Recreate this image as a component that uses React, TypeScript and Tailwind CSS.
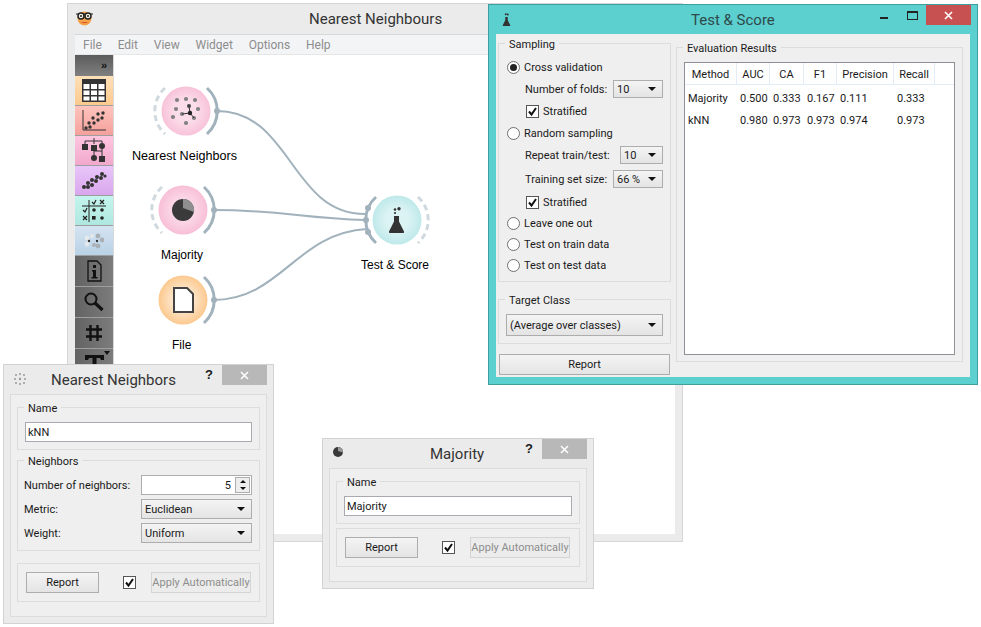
import type { ReactNode } from "react";

const ui = "font-['Roboto',sans-serif] text-[11px] leading-none text-[#1a1a1a] whitespace-nowrap";

function Group({ label, className, children }: { label?: string; className?: string; children?: ReactNode }) {
  return (
    <div className={`relative border border-[#dcdcdc] ${className ?? ""}`}>
      {label && <span className="absolute -top-[6px] left-[6px] bg-[#efefef] px-1 leading-[13px]">{label}</span>}
      {children}
    </div>
  );
}

function Radio({ checked, label }: { checked?: boolean; label: string }) {
  return (
    <div className="flex items-center gap-[4px] h-full">
      <span className="w-[13px] h-[13px] rounded-full border border-[#707070] bg-white flex items-center justify-center shrink-0">
        {checked && <span className="w-[7px] h-[7px] rounded-full bg-[#222]" />}
      </span>
      <span>{label}</span>
    </div>
  );
}

function Check({ label }: { label?: string }) {
  return (
    <div className="flex items-center gap-[4px]">
      <span className="w-[13px] h-[13px] border border-[#555] bg-white flex items-center justify-center shrink-0">
        <svg width="11" height="11" viewBox="0 0 11 11">
          <path d="M2 5.5 L4.5 8.5 L9 2" fill="none" stroke="#111" strokeWidth="2" />
        </svg>
      </span>
      {label && <span>{label}</span>}
    </div>
  );
}

function Combo({ value, className }: { value: string; className?: string }) {
  return (
    <div className={`flex items-center justify-between border border-[#adadad] bg-gradient-to-b from-[#f4f4f4] to-[#e4e4e4] pl-[3px] pr-[6px] ${className ?? ""}`}>
      <span>{value}</span>
      <span className="w-0 h-0 border-x-[4px] border-x-transparent border-t-[4px] border-t-[#111]" />
    </div>
  );
}

function Button({ label, className }: { label: string; className?: string }) {
  return (
    <div className={`flex items-center justify-center border border-[#adadad] bg-gradient-to-b from-[#f4f4f4] to-[#e4e4e4] ${className ?? ""}`}>
      {label}
    </div>
  );
}

function SmallWindow({ title, titleClass, icon, className, children }: { title: string; titleClass: string; icon: ReactNode; className: string; children: ReactNode }) {
  return (
    <div className={`absolute flex flex-col border border-[#d2d2d2] bg-[#ebebeb] ${className} ${ui}`}>
      <div className="flex items-start h-[29px] shrink-0 relative">
        <div className="absolute left-[9px] top-[7px]">{icon}</div>
        <span className={`flex-1 pt-[6px] text-[15px] leading-[18px] text-[#333] ${titleClass}`}>{title}</span>
        <span className="mt-[3px] mr-[9px] text-[13px] font-bold font-['Liberation_Sans',sans-serif]">?</span>
        <div className="w-[45px] h-[20px] mr-[6px] bg-[#b8b8b8] flex items-center justify-center">
          <svg width="9" height="9" viewBox="0 0 9 9"><path d="M1 1 L8 8 M8 1 L1 8" stroke="#fff" strokeWidth="1.5" /></svg>
        </div>
      </div>
      <div className="flex-1 mx-[6px] mb-[6px] border border-[#dcdcdc] bg-[#efefef] px-[6px] flex flex-col">{children}</div>
    </div>
  );
}

function BottomBar() {
  return (
    <Group className="h-[39px] flex items-center pl-[8px]">
      <Button label="Report" className="w-[73px] h-[21px]" />
      <div className="ml-[24px]"><Check /></div>
      <div className="ml-[15px] w-[100px] h-[21px] flex items-center justify-center border border-[#d4d4d4] bg-[#ececec] text-[#8c8c8c]">Apply Automatically</div>
    </Group>
  );
}

function Tile({ className, children }: { className: string; children: ReactNode }) {
  return <div className={`flex items-center justify-center shrink-0 border-b border-[#9e9e9e] ${className}`}>{children}</div>;
}

function Toolbox() {
  const dark = "h-[31px] bg-gradient-to-r from-[#636363] to-[#7c7c7c]";
  return (
    <div className="w-[38px] shrink-0 flex flex-col overflow-hidden">
      <div className="h-[21px] shrink-0 bg-gradient-to-b from-[#5c5c5c] to-[#808080] flex items-center justify-end pr-[6px] text-[11px] font-bold text-[#111] font-['Liberation_Sans',sans-serif]">»</div>
      <Tile className="h-[30px] bg-gradient-to-b from-[#fee0b8] to-[#fbc98d]">
        <svg width="24" height="24" viewBox="0 0 24 24">
          <rect x="0" y="0" width="24" height="23" fill="#333" />
          <path d="M1.5 5 H7.5 V10 H1.5Z M9 5 H15 V10 H9Z M16.5 5 H22.5 V10 H16.5Z M1.5 11.5 H7.5 V16 H1.5Z M9 11.5 H15 V16 H9Z M16.5 11.5 H22.5 V16 H16.5Z M1.5 17.5 H7.5 V21.5 H1.5Z M9 17.5 H15 V21.5 H9Z M16.5 17.5 H22.5 V21.5 H16.5Z" fill="#fff" />
        </svg>
      </Tile>
      <Tile className="h-[30px] bg-gradient-to-b from-[#ffc4bd] to-[#f4a09c]">
        <svg width="26" height="24" viewBox="0 0 26 24">
          <path d="M2 1 V21 H25" fill="none" stroke="#333" />
          <g fill="#333"><circle cx="5" cy="19" r="1.7" /><circle cx="9" cy="18" r="1.7" /><circle cx="8" cy="14" r="1.7" /><circle cx="13" cy="14" r="1.7" /><circle cx="12" cy="9" r="1.7" /><circle cx="17" cy="11" r="1.7" /><circle cx="17" cy="5" r="1.7" /><circle cx="22" cy="4" r="1.7" /><circle cx="21" cy="9" r="1.7" /></g>
        </svg>
      </Tile>
      <Tile className="h-[30px] bg-gradient-to-b from-[#ffc6e0] to-[#f0a8cc]">
        <svg width="26" height="26" viewBox="0 0 26 26">
          <path d="M4 6 V3 H21 V6 M13 0 V6 M21 9 V13 H13 V18 M21 13 V18" fill="none" stroke="#333" />
          <rect x="1" y="6" width="6" height="6" fill="#333" /><rect x="10" y="7" width="6" height="6" fill="#333" /><circle cx="21" cy="8" r="3" fill="#333" /><circle cx="13" cy="20" r="3" fill="#333" /><rect x="18" y="18" width="6" height="6" fill="#333" />
        </svg>
      </Tile>
      <Tile className="h-[30px] bg-gradient-to-b from-[#e9c6fa] to-[#d8a6ec]">
        <svg width="26" height="22" viewBox="0 0 26 22">
          <g fill="#333"><circle cx="3" cy="17" r="2" /><circle cx="7" cy="17" r="2" /><circle cx="7" cy="13" r="2" /><circle cx="11" cy="15" r="2" /><circle cx="11" cy="10" r="2" /><circle cx="15" cy="11" r="2" /><circle cx="16" cy="7" r="2" /><circle cx="20" cy="8" r="2" /><circle cx="21" cy="4" r="2" /><circle cx="24" cy="6" r="1.6" /></g>
        </svg>
      </Tile>
      <Tile className="h-[30px] bg-gradient-to-b from-[#c4f4ee] to-[#afe8e0]">
        <svg width="26" height="24" viewBox="0 0 26 24">
          <path d="M1 7 H25 M8 1 V23" stroke="#222" fill="none" />
          <path d="M11 3 L13 5 L15 1 M19 1 L23 5 M23 1 L19 5 M2 11 L4 13 L6 9 M2 17 L6 21 M6 17 L2 21" stroke="#222" strokeWidth="1.2" fill="none" />
          <circle cx="13" cy="11" r="1.8" fill="#222" /><circle cx="21" cy="11" r="1.8" fill="#222" /><rect x="11" y="17" width="3.6" height="3.6" fill="#222" /><circle cx="21" cy="19" r="1.8" fill="#222" />
        </svg>
      </Tile>
      <Tile className="h-[30px] bg-gradient-to-b from-[#d4e4f2] to-[#b9d2e6]">
        <svg width="20" height="16" viewBox="0 0 20 16">
          <g fill="#e6e9ec"><circle cx="3" cy="5" r="2.4" /><circle cx="3" cy="11" r="2.4" /><circle cx="8" cy="3" r="2" /></g>
          <g fill="#a9b0b6"><circle cx="14" cy="3" r="2.4" /><circle cx="18" cy="7" r="2.4" /><circle cx="14" cy="13" r="2.4" /><circle cx="10" cy="12" r="2" /></g>
          <circle cx="5" cy="8" r="1.2" fill="#333" /><circle cx="13" cy="8" r="1.2" fill="#333" />
        </svg>
      </Tile>
      <Tile className={dark}>
        <svg width="15" height="22" viewBox="0 0 15 22">
          <path d="M1 1 H10 L14 5 V21 H1 Z" fill="none" stroke="#111" strokeWidth="1.3" />
          <rect x="6" y="5" width="3" height="3" fill="#111" /><path d="M5 10 H9 V17 H10.5 V18.5 H4.5 V17 H6 V11.5 H5 Z" fill="#111" />
        </svg>
      </Tile>
      <Tile className={dark}>
        <svg width="20" height="20" viewBox="0 0 20 20">
          <circle cx="7" cy="7" r="5.5" fill="none" stroke="#111" strokeWidth="2" /><path d="M11 11 L18.5 18" stroke="#111" strokeWidth="3.2" />
        </svg>
      </Tile>
      <Tile className={dark}>
        <svg width="18" height="18" viewBox="0 0 18 18">
          <path d="M5.5 1 V17 M12.5 1 V17 M1 5.5 H17 M1 12.5 H17" stroke="#111" strokeWidth="2.4" />
        </svg>
      </Tile>
      <div className="h-[17px] shrink-0 bg-gradient-to-r from-[#636363] to-[#7c7c7c] relative flex justify-center overflow-hidden">
        <svg className="mt-[6px]" width="19" height="14" viewBox="0 0 19 14"><path d="M0 0 H19 V5 H16 L15 3 H11.5 V14 H7.5 V3 H4 L3 5 H0 Z" fill="#111" /></svg>
        <span className="absolute right-[3px] top-[2px] w-0 h-0 border-x-[3px] border-x-transparent border-t-[4px] border-t-[#111]" />
      </div>
    </div>
  );
}

function Node({ cx, cy, from, to, id }: { cx: number; cy: number; from: string; to: string; id: string }) {
  return (
    <>
      <radialGradient id={id}>
        <stop offset="45%" stopColor={from} />
        <stop offset="100%" stopColor={to} />
      </radialGradient>
      <circle cx={cx} cy={cy} r="24.5" fill={`url(#${id})`} />
    </>
  );
}

function Scheme() {
  const wire = "#a1b2bc";
  const ghost = "#cfd9de";
  return (
    <svg className="absolute inset-0" width="562" height="479" viewBox="113 55 562 479">
      <g fill="none" stroke={wire} strokeWidth="2">
        <path d="M216 111 C 290 111, 290 214, 364 214" />
        <path d="M212 210 C 280 210, 300 218, 364 220" />
        <path d="M212 300 C 280 300, 295 233, 366 229" />
      </g>
      <Node cx={185} cy={111} from="#fbdde9" to="#f8c2d8" id="n1" />
      <Node cx={182} cy={210} from="#fbd8e6" to="#f8bfd6" id="n2" />
      <Node cx={182} cy={300} from="#fde4c8" to="#fcc98f" id="n3" />
      <Node cx={396} cy={220} from="#dcf3f4" to="#bfe9ea" id="n4" />

      <g fill="none" strokeWidth="3" strokeLinecap="butt">
        <path d="M206 88 A31 31 0 0 1 206 134" stroke={wire} />
        <path d="M203 187 A31 31 0 0 1 203 233" stroke={wire} />
        <path d="M203 277 A31 31 0 0 1 203 323" stroke={wire} />
        <path d="M375 197 A31 31 0 0 0 375 243" stroke={wire} />
        <path d="M164 88 A31 31 0 0 0 164 134" stroke={ghost} strokeDasharray="6 4" />
        <path d="M161 187 A31 31 0 0 0 161 233" stroke={ghost} strokeDasharray="6 4" />
        <path d="M417 197 A31 31 0 0 1 417 243" stroke={ghost} strokeDasharray="6 4" />
      </g>
      <g fill={wire}>
        <circle cx="216" cy="111" r="3" /><circle cx="213" cy="210" r="3" /><circle cx="213" cy="300" r="3" />
        <circle cx="367" cy="208" r="3" /><circle cx="365" cy="220" r="3" /><circle cx="367" cy="232" r="3" />
      </g>

      <g fill="#808080">
        <circle cx="176" cy="100" r="2.1" /><circle cx="185" cy="99" r="2.1" /><circle cx="194" cy="100" r="2.1" />
        <circle cx="175" cy="109" r="2.1" /><circle cx="197" cy="109" r="2.1" /><circle cx="172" cy="117" r="2.1" />
        <circle cx="193" cy="118" r="2.1" /><circle cx="185" cy="123" r="2.1" /><circle cx="181" cy="114" r="2.1" />
      </g>
      <path d="M188 106 L189 113 M189 113 L181 114 M189 113 L193 118" stroke="#333" strokeWidth="1" />
      <circle cx="188" cy="106" r="2" fill="#444" /><circle cx="189" cy="113" r="2.2" fill="#222" />

      <circle cx="182" cy="210" r="11" fill="#3a3a3a" />
      <path d="M182 199 A11 11 0 0 1 193 212 L182 208 Z" fill="#8f8f8f" />

      <path d="M173 288 H186 L192 294 V312 H173 Z" fill="#fff" stroke="#444" strokeWidth="2" />
      <g transform="translate(388 207)">
        <circle cx="6" cy="2.5" r="1.3" fill="#333" /><circle cx="10" cy="1.8" r="1.7" fill="#333" /><circle cx="6" cy="6" r="1.1" fill="#333" />
        <path d="M5 9 H10 V14.5 L15 24.5 Q15.5 26 14 26 H1 Q-0.5 26 0 24.5 L5 14.5 Z" fill="#333" />
      </g>
    </svg>
  );
}

function MainWindow() {
  const menu = ["File", "Edit", "View", "Widget", "Options", "Help"];
  return (
    <div className="absolute left-[67px] top-[3px] w-[616px] h-[539px] flex flex-col border border-[#d6d6d6] bg-[#ebebeb] font-['Roboto',sans-serif]">
      <div className="h-[30px] shrink-0 relative flex items-center pl-[241px]">
        <svg className="absolute left-[8px] top-[6px]" width="17" height="16" viewBox="0 0 17 16">
          <circle cx="8.5" cy="8.5" r="7" fill="#f3a24a" />
          <path d="M4.5 12 Q8.5 14.5 12.5 12" fill="#e0562a" />
          <path d="M0 4 H17" stroke="#222" strokeWidth="1" />
          <circle cx="5" cy="6" r="3" fill="#f7f0e0" stroke="#222" strokeWidth="1.5" />
          <circle cx="12" cy="6" r="3" fill="#f7f0e0" stroke="#222" strokeWidth="1.5" />
          <circle cx="5" cy="6" r="1" fill="#222" /><circle cx="12" cy="6" r="1" fill="#222" />
        </svg>
        <span className="text-[15px] text-[#333]">Nearest Neighbours</span>
      </div>
      <div className="flex-1 mx-[7px] mb-[7px] border-t border-[#d8d8d8] bg-white flex flex-col min-h-0">
        <div className="h-[20px] shrink-0 bg-[#f3f4f6] border-b border-[#e6e6e6] flex items-center gap-[15.8px] pl-[8px] text-[12px] text-[#8d8d8d]">
          {menu.map((m) => <span key={m}>{m}</span>)}
        </div>
        <div className="flex-1 flex min-h-0">
          <Toolbox />
          <div className="relative flex-1 border-l border-[#d8d8d8] font-['Liberation_Sans',sans-serif] text-[12px] text-black">
            <Scheme />
            <span className="absolute left-[18px] top-[92px] text-[12.6px] whitespace-nowrap">Nearest Neighbors</span>
            <span className="absolute left-[47px] top-[191px]">Majority</span>
            <span className="absolute left-[58px] top-[281px]">File</span>
            <span className="absolute left-[247px] top-[201px] whitespace-nowrap">Test &amp; Score</span>
          </div>
        </div>
      </div>
    </div>
  );
}

function TestScore() {
  const cols = ["Method", "AUC", "CA", "F1", "Precision", "Recall"];
  const rows = [
    ["Majority", "0.500", "0.333", "0.167", "0.111", "0.333"],
    ["kNN", "0.980", "0.973", "0.973", "0.974", "0.973"],
  ];
  const widths = "grid grid-cols-[52px_33px_34px_33px_57px_41px_1fr]";
  return (
    <div className={`absolute left-[488px] top-[4px] w-[490px] h-[381px] flex flex-col border border-[#3f9fa0] bg-[#5ccfcf] ${ui}`}>
      <div className="h-[29px] shrink-0 relative flex items-start">
        <svg className="absolute left-[13px] top-[8px]" width="9" height="13" viewBox="0 0 15 26">
          <circle cx="6" cy="2.5" r="2" fill="#333" /><circle cx="10" cy="3" r="2" fill="#333" />
          <path d="M5 8 H10 V14.5 L15 24.5 Q15.5 26 14 26 H1 Q-0.5 26 0 24.5 L5 14.5 Z" fill="#333" />
        </svg>
        <span className="flex-1 pl-[202px] pt-[6px] text-[15px] leading-[18px] text-[#2e4a4a]">Test &amp; Score</span>
        <div className="absolute right-[51px] top-0 w-[46px] h-[20px]">
          <span className="absolute left-0 top-[12px] w-[8px] h-[2px] bg-[#222]" />
          <span className="absolute left-[27px] top-[6px] w-[11px] h-[9px] border border-[#222] border-t-2" />
        </div>
        <div className="w-[45px] h-[20px] mr-[6px] bg-[#c75050] flex items-center justify-center">
          <svg width="9" height="9" viewBox="0 0 9 9"><path d="M1 1 L8 8 M8 1 L1 8" stroke="#fff" strokeWidth="1.6" /></svg>
        </div>
      </div>
      <div className="mx-[7px] mb-[7px] flex-1 bg-[#efefef] flex pl-[2px] pt-[9px] pr-[7px]">
        <div className="w-[173px] shrink-0 flex flex-col">
          <Group label="Sampling" className="h-[239px] pt-[13px] pl-[8px] pr-[7px]">
            <div className="h-[21px]"><Radio checked label="Cross validation" /></div>
            <div className="h-[22px] flex items-center justify-between pl-[18px]"><span>Number of folds:</span><Combo value="10" className="w-[50px] h-[18px]" /></div>
            <div className="h-[23px] flex items-center pl-[19px]"><Check label="Stratified" /></div>
            <div className="h-[20px]"><Radio label="Random sampling" /></div>
            <div className="h-[24px] flex items-center justify-between pl-[18px]"><span>Repeat train/test:</span><Combo value="10" className="w-[43px] h-[18px]" /></div>
            <div className="h-[24px] flex items-center justify-between pl-[18px]"><span>Training set size:</span><Combo value="66 %" className="w-[50px] h-[18px]" /></div>
            <div className="h-[22px] flex items-center pl-[19px]"><Check label="Stratified" /></div>
            <div className="h-[20px]"><Radio label="Leave one out" /></div>
            <div className="h-[22px]"><Radio label="Test on train data" /></div>
            <div className="h-[20px]"><Radio label="Test on test data" /></div>
          </Group>
          <Group label="Target Class" className="h-[45px] mt-[17px] pt-[14px] px-[7px]">
            <Combo value="(Average over classes)" className="h-[22px]" />
          </Group>
          <Button label="Report" className="h-[21px] mt-[10px] mx-[1px]" />
        </div>
        <Group label="Evaluation Results" className="ml-[5px] flex-1 h-[315px] mt-[4px] px-[7px] pt-[14px]">
          <div className="h-[293px] border border-[#8f8f98] bg-white">
            <div className={`${widths} h-[22px] border-b border-[#e3edf8] items-center text-center`}>
              {cols.map((c) => <span key={c} className="h-full pt-[2px] flex items-center justify-center border-r border-[#e3edf8]">{c}</span>)}
            </div>
            <div className="pt-[2px]">
              {rows.map((r) => (
                <div key={r[0]} className={`${widths} h-[22px] items-center`}>
                  {r.map((v, i) => <span key={i} className="pl-[3px]">{v}</span>)}
                </div>
              ))}
            </div>
          </div>
        </Group>
      </div>
    </div>
  );
}

export default function App() {
  return (
    <div className="relative w-[981px] h-[627px] bg-white overflow-hidden">
      <MainWindow />
      <TestScore />

      <SmallWindow
        title="Nearest Neighbors"
        titleClass="pl-[47px]"
        className="left-[3px] top-[364px] w-[271px] h-[260px]"
        icon={
          <svg width="14" height="14" viewBox="0 0 14 14">
            <g fill="#9a9a9a"><circle cx="3" cy="3" r="1" /><circle cx="7" cy="2" r="1" /><circle cx="11" cy="3" r="1" /><circle cx="2" cy="7" r="1" /><circle cx="12" cy="7" r="1" /><circle cx="3" cy="11" r="1" /><circle cx="7" cy="12" r="1" /><circle cx="11" cy="11" r="1" /><circle cx="7" cy="7" r="1.2" /></g>
          </svg>
        }
      >
        <Group label="Name" className="mt-[12px] h-[43px] pt-[14px] px-[7px]">
          <div className="h-[20px] border border-[#a9a9b0] bg-white flex items-center pl-[2px]">kNN</div>
        </Group>
        <Group label="Neighbors" className="mt-[10px] h-[91px] pt-[14px] pl-[6px] pr-[7px] flex flex-col gap-[4px]">
          <div className="flex items-center justify-between h-[20px]">
            <span>Number of neighbors:</span>
            <div className="w-[111px] h-[20px] border border-[#adadad] bg-white flex items-center justify-end">
              <span className="pr-[4px]">5</span>
              <div className="w-[15px] h-[16px] mr-[1px] border border-[#adadad] bg-[#eee] flex flex-col items-center justify-around">
                <span className="w-0 h-0 border-x-[3px] border-x-transparent border-b-[3px] border-b-[#111]" />
                <span className="w-0 h-0 border-x-[3px] border-x-transparent border-t-[3px] border-t-[#111]" />
              </div>
            </div>
          </div>
          <div className="flex items-center justify-between h-[20px]"><span>Metric:</span><Combo value="Euclidean" className="w-[111px] h-[20px]" /></div>
          <div className="flex items-center justify-between h-[20px]"><span>Weight:</span><Combo value="Uniform" className="w-[111px] h-[20px]" /></div>
        </Group>
        <div className="mt-[12px]"><BottomBar /></div>
      </SmallWindow>

      <SmallWindow
        title="Majority"
        titleClass="pl-[107px]"
        className="left-[322px] top-[438px] w-[272px] h-[151px]"
        icon={
          <svg width="12" height="12" viewBox="0 0 12 12">
            <circle cx="6" cy="6" r="5" fill="#3a3a3a" /><path d="M6 1 A5 5 0 0 1 11 6.5 L6 5 Z" fill="#9a9a9a" />
          </svg>
        }
      >
        <Group label="Name" className="mt-[12px] h-[43px] pt-[14px] px-[7px]">
          <div className="h-[20px] border border-[#a9a9b0] bg-white flex items-center pl-[2px]">Majority</div>
        </Group>
        <div className="mt-[4px]"><BottomBar /></div>
      </SmallWindow>
    </div>
  );
}
